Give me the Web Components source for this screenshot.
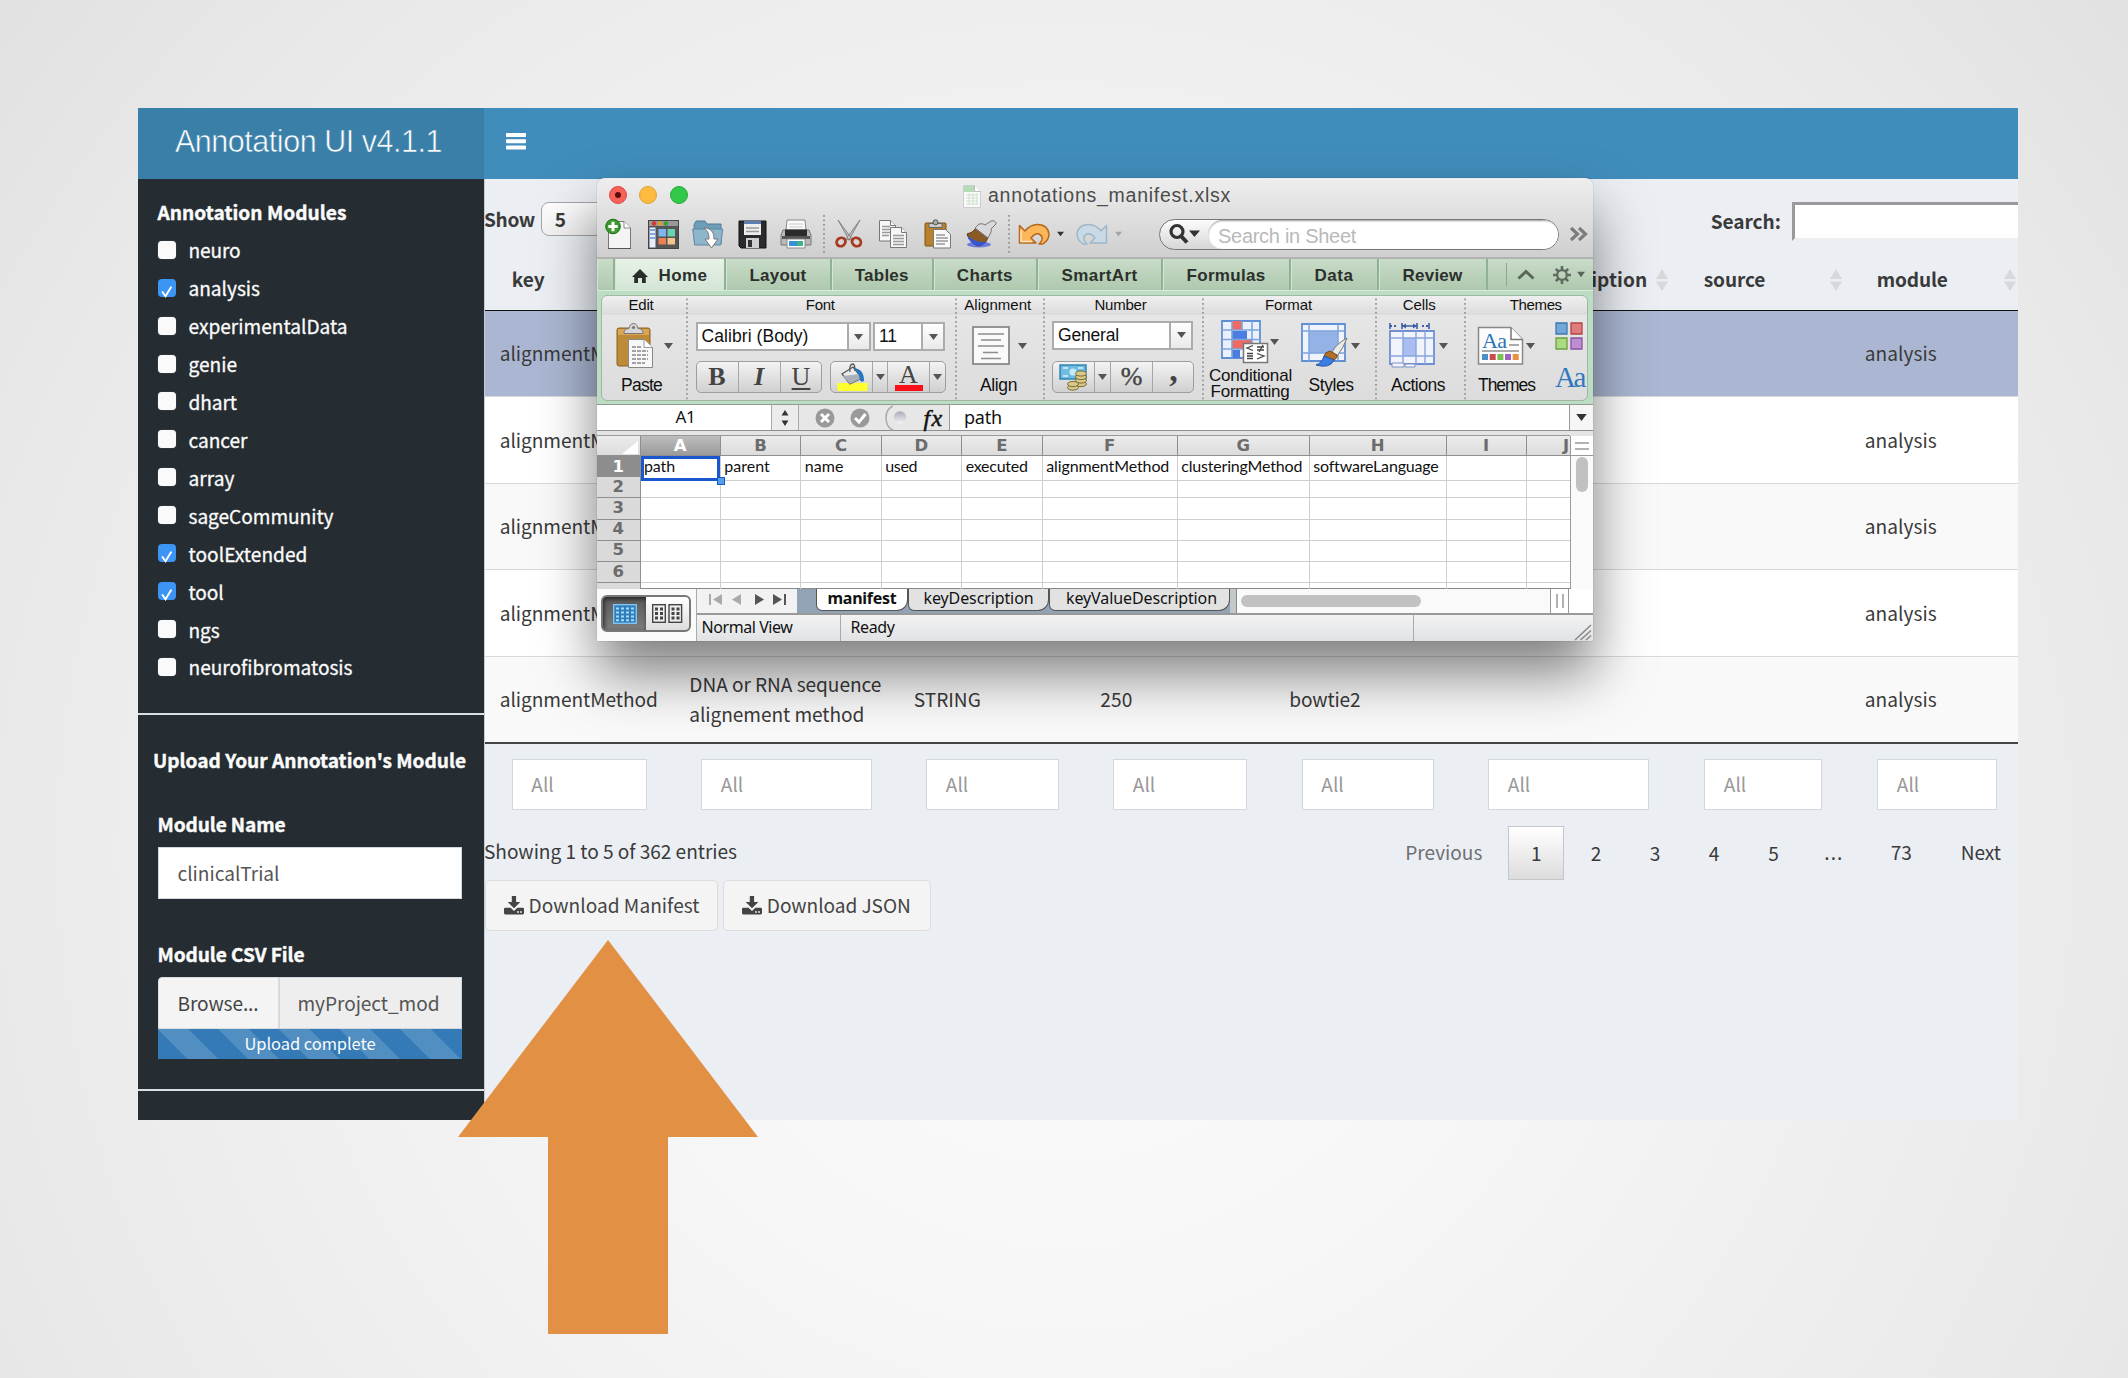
<!DOCTYPE html>
<html lang="en">
<head>
<meta charset="utf-8">
<title>Annotation UI</title>
<style>
html,body{margin:0;height:100%;overflow:hidden}
</style>
</head>
<body>
<annotation-slide></annotation-slide>
<script>
const SRC = '"Noto Sans CJK JP","Source Sans Pro",sans-serif';
const HEL = '"Liberation Sans",Arial,sans-serif';

/* Lays items out on one grid line; every item starts at its own column line. */
function line(x0, h, items, style = '') {
  let prev = x0, cols = [];
  for (const [x] of items) { cols.push((x - prev) + 'px'); prev = x; }
  cols.push('auto');
  return `<div style="display:grid;grid-template-columns:${cols.join(' ')};grid-template-rows:${h}px;height:${h}px;align-items:center;justify-content:start;${style}"><i></i>${items.map(i => `<div class="c">${i[1]}</div>`).join('')}</div>`;
}
const t = (s, w, style = '') => `<ui-text w="${w}" style="${style}">${s}</ui-text>`;
const ic = (n, style = '') => `<ui-icon name="${n}" style="${style}"></ui-icon>`;

class Base extends HTMLElement {
  connectedCallback() {
    if (this.shadowRoot) return;
    this.attachShadow({ mode: 'open' }).innerHTML = '<style>.c{display:flex;align-items:center;width:0;white-space:nowrap}.c>*{flex:none}' + this.css() + '</style>' + this.html();
  }
}

/* Text whose tracking is adjusted to a given width. */
customElements.define('ui-text', class extends HTMLElement {
  connectedCallback() {
    if (this.shadowRoot) return;
    this.attachShadow({ mode: 'open' }).innerHTML = '<style>:host{display:inline-block;white-space:pre;line-height:1.2;flex:none}</style><slot></slot>';
    const w = parseFloat(this.getAttribute('w'));
    if (!w) return;
    const n = this.textContent.length, nat = this.getBoundingClientRect().width;
    if (n > 1 && nat) this.style.letterSpacing = ((w - nat) / n).toFixed(3) + 'px';
  }
});

const caret = (c = '#555', w = 9, h = 6) => `<svg width="${w}" height="${h}" viewBox="0 0 9 6"><path d="M0 0h9L4.500 6z" fill="${c}"/></svg>`;
const ICONS = {
  bars: `<svg width="20" height="17"><g fill="#fff"><rect width="20" height="4" rx=".8"/><rect y="6.200" width="20" height="4" rx=".8"/><rect y="12.500" width="20" height="4" rx=".8"/></g></svg>`,
  sort: `<svg width="12" height="22"><path d="M6 0l6 10H0zM0 12.500h12L6 22z" fill="#d6d8da"/></svg>`,
  download: `<svg width="20" height="19" viewBox="0 0 20 19"><path d="M7.800 0h4.300v6h4.200L10 12.300 3.700 6h4.100z" fill="#444"/><path d="M1.300 11.800H6.600L10 15l3.400-3.200h5.300q1.300 0 1.300 1.300v4q0 1.400-1.300 1.400H1.300Q0 18.500 0 17.100v-4q0-1.300 1.300-1.300z" fill="#444"/><circle cx="14" cy="16" r=".9" fill="#f4f4f4"/><circle cx="17" cy="16" r=".9" fill="#f4f4f4"/></svg>`,
  check: `<svg width="18" height="18"><path d="M4.500 9l3 4.200L13 4.200" fill="none" stroke="#fff" stroke-width="1.900" stroke-linecap="round"/></svg>`,
  xlsx: `<svg width="18" height="23"><path d="M.5.5h11l6 6v16H.5z" fill="#fafafa" stroke="#ccc"/><path d="M1 1h10v6H1z" fill="#b4dcb4"/><path d="M11.500.5v6h6" fill="#fff" stroke="#bbb"/><path d="M3 10h12M3 13h12M3 16h12M3 19h12M6 8v12M10 8v12M14 8v12" stroke="#cfe0cf"/></svg>`,
  neu: `<svg width="28" height="32"><path d="M5 3.500h14l6.500 6.500v20.500H3.500V8z" fill="#f4f4f4" stroke="#777"/><path d="M19 3.500V10h6.500" fill="#fff" stroke="#888"/><path d="M3 30.500h23" stroke="#555"/><circle cx="8" cy="8.500" r="7.300" fill="#3a9a2c" stroke="#1d6d16"/><path d="M8 3.800v9.400M3.300 8.500h9.400" stroke="#fff" stroke-width="3"/></svg>`,
  gallery: `<svg width="31" height="29"><rect x=".5" y=".5" width="30" height="28" fill="#555" stroke="#444"/><rect x="1" y="1" width="29" height="5" fill="#999"/><circle cx="6" cy="3.500" r="2.200" fill="#d8352a"/><circle cx="12" cy="3.500" r="2.200" fill="#e79a24"/><circle cx="18" cy="3.500" r="2.200" fill="#38a12c"/><path d="M1.500 7.500h6v20h-6z" fill="#e6eef9"/><path d="M2 10h5M2 14h5M2 18h5" stroke="#5e8ed8" stroke-width="1.600"/><path d="M10.500 9h7.500v7.500h-7.500z" fill="#7fb4ee"/><path d="M19.500 9H27v7.500h-7.500z" fill="#69d4b4"/><path d="M10.500 18H18v6.500h-7.500z" fill="#ee8058"/><path d="M19.500 18H27v6.500h-7.500z" fill="#f3c58c"/></svg>`,
  open: `<svg width="32" height="30"><path d="M2 6l2-4h9l2 3h14v20H3z" fill="#6f9db8" stroke="#4e7c98"/><path d="M.7 10h30l-2 16H2.700z" fill="#8fb5cb" stroke="#5b89a5"/><path d="M12 9c7 0 10 4 10 11h4l-6.500 9L13 20h4c0-5-1-8-5-11z" fill="#fff" stroke="#777"/></svg>`,
  save: `<svg width="29" height="29"><path d="M1 1h27v27H3l-2-2z" fill="#2b2b2f" stroke="#111"/><path d="M6 1h17v14H6z" fill="#eee"/><path d="M6 1h17v3H6z" fill="#5d7fb2"/><path d="M8 8h13M8 11.500h13" stroke="#999" stroke-width="1.500"/><path d="M8 18h13v10H8z" fill="#cfcfcf"/><path d="M10 20h4v7h-4z" fill="#333"/></svg>`,
  print: `<svg width="32" height="30"><path d="M7 1h18l1 11H6z" fill="#fafafa" stroke="#888"/><path d="M9 5h14M9 8h14" stroke="#ccc"/><path d="M3 11h26l2 5v10H1V16z" fill="#b9b9b9" stroke="#777"/><path d="M5 10.500h22v7H5z" fill="#2a2a2a"/><path d="M2 17h28v3H2z" fill="#555"/><path d="M7 20h18v9H7z" fill="#fff" stroke="#888"/><path d="M9 22h14v5H9z" fill="#3a8fd8"/><path d="M17 22h6v5h-6z" fill="#3fb48a"/></svg>`,
  cut: `<svg width="28" height="30"><path d="M3 1l14 19-3 1zM25 1L11 20l3 1z" fill="#bbb" stroke="#777" stroke-width=".8"/><g fill="none" stroke="#a8381e" stroke-width="2.800"><ellipse cx="6" cy="23" rx="4.600" ry="4" transform="rotate(-35 6 23)"/><ellipse cx="21.500" cy="23" rx="4.600" ry="4" transform="rotate(35 21.500 23)"/></g></svg>`,
  copy: `<svg width="30" height="30"><g fill="#f6f6f6" stroke="#777"><path d="M1.500 1.500h11l5 5v15.500h-16z"/><path d="M12.500 1.500v5h5"/><path d="M12.500 8.500h11l5 5v15h-16z"/><path d="M23.500 8.500v5h5"/></g><path d="M4 7.500h8M4 10.500h8M4 13.500h8M4 16.500h7M15 16.500h11M15 19.500h11M15 22.500h11M15 25.500h11" stroke="#999" stroke-width="1.300"/></svg>`,
  paste: `<svg width="28" height="30" viewBox="0 0 28 30"><rect x="1" y="4" width="21" height="23" rx="1" fill="#b9812c" stroke="#7c5315"/><path d="M5 4.500h13v4H5z" fill="#ccc" stroke="#666"/><circle cx="11.500" cy="3.300" r="2.500" fill="#aaa" stroke="#555"/><path d="M9.500 10.500h12l5 5v13.500h-17z" fill="#fafafa" stroke="#777"/><path d="M12 16h9M12 19h12M12 22h12M12 25h9" stroke="#999" stroke-width="1.400"/></svg>`,
  brush: `<svg width="34" height="30"><ellipse cx="14" cy="25.500" rx="12" ry="3" fill="#4a5fe0" opacity=".75"/><path d="M2 15q6-1 9-6l12 9q-2 8-10 9Q5 24 2 15z" fill="#8a5a24" stroke="#5d3b14"/><path d="M2 16q2 8 11 11 6-1 8-4Q9 24 2 16z" fill="#3357d6"/><path d="M10 9l4-4q4-1 6 1l6-4q5-1 5 3l-5 5q1 3-1 5l-2 4z" fill="#d9d9dc" stroke="#777"/></svg>`,
  undo: `<svg width="32" height="24" viewBox="0 0 32 24"><path d="M1.500 3.500L1.500 21H18l-5-5q4-5 8-4 4 2 3 6-1 2-3 4h4q6-4 6-10Q30 3 20 2.500 13 2 7 9z" fill="#fbb75a" stroke="#b5671a" stroke-width="1.500" stroke-linejoin="round"/><path d="M3 8v11.500h11" fill="none" stroke="#fde3bd" stroke-width="1.500"/></svg>`,
  redo: `<svg width="32" height="24" viewBox="0 0 32 24"><g transform="translate(32 0) scale(-1 1)"><path d="M1.500 3.500L1.500 21H18l-5-5q4-5 8-4 4 2 3 6-1 2-3 4h4q6-4 6-10Q30 3 20 2.500 13 2 7 9z" fill="#c9dae6" stroke="#9fb7c9" stroke-width="1.500" stroke-linejoin="round"/></g></svg>`,
  mag: `<svg width="32" height="20"><circle cx="8" cy="7.500" r="6" fill="none" stroke="#333" stroke-width="3.200"/><path d="M12 12l6 6.500" stroke="#333" stroke-width="4"/><path d="M20 6.500h11L25.500 13z" fill="#333"/></svg>`,
  more: `<svg width="20" height="14"><path d="M2 1l6.500 6L2 13M10 1l6.500 6L10 13" fill="none" stroke="#7c7c7c" stroke-width="3.200"/></svg>`,
  home: `<svg width="16" height="14"><path d="M8 0l8 8h-2.200v6H10V9H6v5H2.200V8H0z" fill="#2a2d2a"/></svg>`,
  chev: `<svg width="18" height="11"><path d="M1.500 9.500L9 2.500l7.500 7" fill="none" stroke="#5a665a" stroke-width="3"/></svg>`,
  gear: `<svg width="18" height="18" viewBox="-9 -9 18 18"><circle r="4.800" fill="none" stroke="#5f6b5f" stroke-width="2.200"/><g stroke="#5f6b5f" stroke-width="2.600"><path d="M0-5V-9M0 5V9M-5 0H-9M5 0H9M3.500-3.500L6.200-6.200M-3.500-3.500L-6.200-6.200M3.500 3.500L6.200 6.200M-3.500 3.500L-6.200 6.200"/></g></svg>`,
  bigpaste: `<svg width="38" height="46"><rect x="1" y="5" width="33" height="38" rx="2" fill="#bd8a37" stroke="#8a6020"/><path d="M2 6h31v6H2z" fill="#d9a655"/><path d="M8 10.500q0-5 5-5 1-5 4.500-5t4.500 5q5 0 5 5z" fill="#d6d6d6" stroke="#777"/><circle cx="17.500" cy="4.500" r="1.600" fill="#777"/><path d="M12.500 16.500H28l8.500 8v20h-24z" fill="#f7f7f7" stroke="#888"/><path d="M28 16.500v8h8.500" fill="#fff" stroke="#999"/><path d="M16 24h9M16 28h16M16 32h16M16 36h16M16 40h13" stroke="#888" stroke-width="1.500" stroke-dasharray="4 1"/></svg>`,
  bucket: `<svg width="32" height="28"><path d="M1.500 25V20h30v8h-30z" fill="#ffff2e"/><path d="M6 11L17 4l9 11-12 6z" fill="#e8ebee" stroke="#555" stroke-width="1.300"/><path d="M7 13l16-2 3 4-12 6z" fill="#a8b0b8"/><path d="M14 9q-1-8 3-8 2 0 2 7" fill="none" stroke="#555" stroke-width="1.300"/><path d="M18 5q10 1 10 13-3 2-4-1-1-7-6-12z" fill="#2375c0"/></svg>`,
  align: `<svg width="38" height="40"><rect x="1" y="1" width="36" height="37" fill="#fafafa" stroke="#8a8a8a" stroke-width="1.800"/><path d="M6 8h26M9 14h20M6 20h26M11 26.500h15M9 32.500h20" stroke="#8d8d8d" stroke-width="1.600"/></svg>`,
  money: `<svg width="30" height="27"><rect x="1" y="1" width="26" height="14" fill="#6fbce0" stroke="#2e86b4" stroke-width="1.500"/><path d="M4 4h5M4 12h5M19 4h5" stroke="#d9f1fb" stroke-width="1.500"/><circle cx="14" cy="8" r="3.500" fill="#c7e9f7"/><g fill="#d8c88a" stroke="#7c6c34"><ellipse cx="22" cy="20" rx="5.500" ry="2.600"/><ellipse cx="22" cy="16.500" rx="5.500" ry="2.600"/><ellipse cx="22" cy="13" rx="5.500" ry="2.600"/><ellipse cx="22" cy="9.500" rx="5.500" ry="2.600"/><ellipse cx="14" cy="23.500" rx="5.500" ry="2.600"/><ellipse cx="14" cy="20" rx="5.500" ry="2.600"/></g></svg>`,
  cond: `<svg width="48" height="44"><path d="M1 1h38v37H1z" fill="#eaf1fc" stroke="#5f8fd2" stroke-width="1.800"/><path d="M11 1h10v9H11z M11 20h20v9H11z" fill="#ef6a60"/><path d="M11 11h15v8H11zM11 30h8v8h-8z" fill="#4b7de0"/><path d="M1 10h38M1 19.500h38M1 29h38M11 1v37M21 1v9M31 1v37" stroke="#7ea4dd" stroke-width="1.600"/><path d="M22.500 23.500h24v19h-24z" fill="#fff" stroke="#777" stroke-width="1.500"/><path d="M32 25.500l-6 2.500 6 2.500M26 33.500h6M26 36h6M26 38.500h6M36 27h7M36 30h7M42 25l-4 7M36 33.500l7 2.500-7 3" fill="none" stroke="#444" stroke-width="1.300"/></svg>`,
  styles: `<svg width="48" height="46"><path d="M1 1h43v37H1z" fill="#eef3fc" stroke="#5f8fd2" stroke-width="1.800"/><path d="M8 8h29v22H8z" fill="#94b2e6"/><path d="M1 8h43M1 30h43M8 1v37M37 1v37" stroke="#7ea4dd" stroke-width="1.500"/><path d="M46 15q-11 6-15 14l5 4q6-7 10-18z" fill="#e9e9e9" stroke="#777"/><path d="M29 28q-5 1-6 5l10 4q4-2 3-5z" fill="#b0702a" stroke="#7a4a14"/><path d="M23 33q-2 7-8 9 14 4 18-5z" fill="#3b7de0" stroke="#2458a8"/></svg>`,
  actions: `<svg width="47" height="46"><path d="M1 3h8M33 3h7" stroke="#3a5da8" stroke-width="2" stroke-dasharray="2 2"/><path d="M1 0v6M13 0v6M28 0v6M40 0v6M13 3h15" stroke="#3a5da8" stroke-width="1.600"/><path d="M13 3l4-2.500v5zM28 3l-4-2.500v5z" fill="#3a5da8"/><path d="M1 8h44v33H1z" fill="#f1f4fc" stroke="#6e8fd0" stroke-width="1.800"/><path d="M14 15h13v18H14z" fill="#a9bdf0"/><path d="M1 15h44M1 33h44M14 8v33M27 8v33M36 8v33" stroke="#8aa4dc" stroke-width="1.400"/><path d="M3 40h12v4H3zM16 41h10v3H16z" fill="#f3f5fb" stroke="#7b90c4"/></svg>`,
  themes: `<svg width="47" height="40"><path d="M1.500 1.500h32l12 12v24.500h-44z" fill="#fcfcfc" stroke="#888" stroke-width="1.500"/><path d="M34 1.500V13.500h11.500" fill="#fff" stroke="#777" stroke-width="1.500"/><text x="5" y="22" font-family="Liberation Serif" font-size="22" fill="#2b72ba" textLength="25">Aa</text><path d="M32 19h10M5 25h37" stroke="#aaa" stroke-width="2"/><path d="M5 28h6v6H5z" fill="#4a90c8"/><path d="M12.700 28h6v6h-6z" fill="#cc4a50"/><path d="M20.400 28h6v6h-6z" fill="#78c050"/><path d="M28 28h6v6h-6z" fill="#a060c0"/><path d="M35.700 28h6v6h-6z" fill="#ea9040"/></svg>`,
  squares: `<svg width="28" height="28"><g stroke-width="1.300"><path d="M1 1h11v11H1z" fill="#72a8d8" stroke="#3d78b0"/><path d="M16 1h11v11H16z" fill="#e07c7c" stroke="#b04444"/><path d="M1 16h11v11H1z" fill="#acdc82" stroke="#6aa040"/><path d="M16 16h11v11H16z" fill="#bf8ed2" stroke="#8a52a4"/></g></svg>`,
  step: `<svg width="8" height="16"><path d="M4 0l3.500 5.500H.5zM.5 10.500h7L4 16z" fill="#333"/></svg>`,
  no: `<svg width="20" height="20"><circle cx="10" cy="10" r="9.500" fill="#999"/><path d="M6 6l8 8M14 6l-8 8" stroke="#fff" stroke-width="3"/></svg>`,
  yes: `<svg width="20" height="20"><circle cx="10" cy="10" r="9.500" fill="#999"/><path d="M5 10l4 4 6.500-8" fill="none" stroke="#fff" stroke-width="3"/></svg>`,
  ball: `<svg width="24" height="26"><defs><linearGradient id="b" x2="0" y2="1"><stop stop-color="#a9acb8"/><stop offset="1" stop-color="#f4f4f4"/></linearGradient></defs><path d="M9 1Q2 4 2 13t7 12" fill="none" stroke="#aaa" stroke-width="1.500"/><circle cx="16" cy="12.500" r="6.200" fill="url(#b)"/></svg>`,
  corner: `<svg width="16" height="13"><path d="M16 0v13H0z" fill="#fff"/></svg>`,
  normal: `<svg width="24" height="20"><rect x=".7" y=".7" width="22.600" height="18.600" fill="#2e7cba" stroke="#7fc4f2" stroke-width="1.400"/><path d="M3 3.500h3v2H3zM8 3.500h3v2H8zM13 3.500h3v2h-3zM18 3.500h3v2h-3zM3 7.500h3v2H3zM8 7.500h3v2H8zM13 7.500h3v2h-3zM18 7.500h3v2h-3zM3 11.500h3v2H3zM8 11.500h3v2H8zM13 11.500h3v2h-3zM18 11.500h3v2h-3zM3 15.300h3v2H3zM8 15.300h3v2H8zM13 15.300h3v2h-3zM18 15.300h3v2h-3z" fill="#a5dbfa"/></svg>`,
  pages: `<svg width="31" height="20"><g fill="#eee" stroke="#444" stroke-width="1.400"><rect x=".7" y=".7" width="12.600" height="17.600"/><rect x="17" y=".7" width="12.600" height="17.600"/></g><path d="M3 3.500h3v3H3zM8 3.500h3v3H8zM3 8h3v3H3zM8 8h3v3H8zM3 12.500h3v3H3zM8 12.500h3v3H8zM19.500 3.500h3v3h-3zM24.500 3.500h3v3h-3zM19.500 8h3v3h-3zM24.500 8h3v3h-3zM19.500 12.500h3v3h-3zM24.500 12.500h3v3h-3z" fill="#444"/></svg>`,
  first: `<svg width="13" height="11"><path d="M1 0v11" stroke="#aaa" stroke-width="2"/><path d="M13 0v11L4 5.500z" fill="#aaa"/></svg>`,
  prev: `<svg width="9" height="11"><path d="M9 0v11L0 5.500z" fill="#aaa"/></svg>`,
  next: `<svg width="9" height="11"><path d="M0 0v11l9-5.500z" fill="#555"/></svg>`,
  last: `<svg width="13" height="11"><path d="M12 0v11" stroke="#555" stroke-width="2"/><path d="M0 0v11l9-5.500z" fill="#555"/></svg>`,
  grip: `<svg width="16" height="16"><path d="M0 16L16 1M5.500 16L16 6.500M11 16l5-4.500" stroke="#888" stroke-width="1.500"/></svg>`,
  hsplit: `<svg width="14" height="8"><path d="M0 1h14M0 7h14" stroke="#999" stroke-width="1.500"/></svg>`,
  vsplit: `<svg width="8" height="14"><path d="M1 0v14M7 0v14" stroke="#999" stroke-width="1.500"/></svg>`,
  caret: caret(), caretk: caret('#333', 7, 6), caretg: caret('#a3a3a3', 7, 6), caretb: caret('#333', 11, 7), carett: caret('#5a665a', 8, 7)
};
customElements.define('ui-icon', class extends Base {
  css() { return ':host{display:inline-flex;flex:none}svg{display:block;overflow:visible}'; }
  html() { return ICONS[this.getAttribute('name')] || ''; }
});

customElements.define('module-check', class extends Base {
  css() { return `:host{display:flex;height:37.93px;align-items:center;padding-left:20px}
    .b{width:18px;height:18px;border-radius:4px;background:#fafafa;box-shadow:0 0 1px #999;margin-right:12.500px;flex:none;position:relative;top:-1px}
    :host([on]) .b{background:#3c94f4;box-shadow:none}`; }
  html() { return `<div class="b">${this.hasAttribute('on') ? ic('check') : ''}</div><slot></slot>`; }
});

customElements.define('side-bar', class extends Base {
  css() { return `:host{display:flex;flex-direction:column;width:346px;background:#252d32;color:#fbfbfb;font:19.100px ${SRC}}
    .h{font-weight:700;display:flex;align-items:center;-webkit-text-stroke:.4px}
    hr{border:0;height:2px;background:#dcdfe2;margin:0}
    .in{box-sizing:border-box;width:304px;height:52px;background:#fff;border:1.500px solid #d2d6de;margin-left:20px;color:#555;display:flex;align-items:center}
    .up{display:flex;box-sizing:border-box;width:304px;height:52px;margin-left:20px;color:#444}
    .up>div{box-sizing:border-box;display:flex;align-items:center;padding-left:18.500px}
    .br{width:121px;background:#f4f4f4;border:1px solid #ddd;border-radius:4px 0 0 0}
    .fn{width:183px;background:#eee;border:1.500px solid #d2d6de;color:#555}
    .pr{width:304px;height:30px;margin-left:20px;background:linear-gradient(45deg,rgba(255,255,255,.15) 25%,transparent 25%,transparent 50%,rgba(255,255,255,.15) 50%,rgba(255,255,255,.15) 75%,transparent 75%) 0 0/60.600px 60.600px #337ab7;display:flex;align-items:center;justify-content:center;font-size:16.500px}
    module-check{-webkit-text-stroke:.3px}`; }
  html() {
    const m = [['neuro', 52], ['analysis', 71.5, 1], ['experimentalData', 159], ['genie', 48.5], ['dhart', 48.5], ['cancer', 59], ['array', 46], ['sageCommunity', 145], ['toolExtended', 119, 1], ['tool', 35, 1], ['ngs', 31], ['neurofibromatosis', 164]];
    return `<div class="h" style="padding-left:19.500px;height:52px;margin-bottom:.800px">${t('Annotation Modules', 189, 'position:relative;top:7px')}</div>
    ${m.map(([n, w, on]) => `<module-check ${on ? 'on' : ''}>${t(n, w)}</module-check>`).join('')}
    <hr style="margin-top:26.200px">
    <div class="h" style="height:90px;padding-left:15px">${t("Upload Your Annotation's Module", 313)}</div>
    <div class="h" style="height:42px;padding-left:19.500px;position:relative;top:-2px">${t('Module Name', 128)}</div>
    <div class="in"><span style="width:18.500px"></span>${t('clinicalTrial', 102)}</div>
    <div class="h" style="height:78px;padding-left:19.500px;box-sizing:border-box;padding-top:33px">${t('Module CSV File', 147)}</div>
    <div class="up"><div class="br">${t('Browse...', 81)}</div><div class="fn" style="padding-left:17.500px">${t('myProject_mod', 142)}</div></div>
    <div class="pr">${t('Upload complete', 131)}</div>
    <hr style="margin-top:30px">`;
  }
});

customElements.define('data-table', class extends Base {
  css() { return `:host{display:block;flex:1;min-width:0;background:#ebeff4;color:#3a3a3a;font:19.100px ${SRC};overflow:hidden;border-left:1px solid #c8ccd2;box-sizing:border-box}
    .r{border-bottom:1.500px solid #d9d9da;box-sizing:border-box;height:86.500px;display:flex}
    .all{box-sizing:border-box;height:51px;background:#fff;border:1.500px solid #d2d8e2;display:flex;align-items:center;padding-left:18.500px;color:#999;flex:none}
    .cur{box-sizing:border-box;width:56px;height:54px;border:1.500px solid #c5c6c9;background:linear-gradient(#fff,#dcdcdc);display:flex;align-items:center;justify-content:center;flex:none}
    .btn{box-sizing:border-box;height:51px;border:1.500px solid #ddd;border-radius:5px;background:#f4f4f4;color:#444;display:flex;align-items:center;flex:none;padding-left:18px;gap:4.500px}
    .sel{box-sizing:border-box;width:105px;height:34px;border:1.500px solid #a5a5a5;border-radius:8px;background:linear-gradient(#fdfdfd,#f1f1f1);display:flex;align-items:center;padding-left:13px;font-weight:700}
    .q{width:300px;height:33px;border:3px solid #9a9a9a;border-right-color:#eee;border-bottom-color:#eee;background:#fff}`; }
  html() {
    const x = 485.2, row = (bg, extra = []) => `<div class="r" style="background:${bg}">${line(x, 86, [[500, t('alignmentMethod', 158)], ...extra, [1865, t('analysis', 72)]])}</div>`;
    const all = [[512, 135.500], [701.500, 171], [926.500, 133], [1113.500, 134], [1302, 132], [1488.500, 161], [1704.500, 118], [1877.500, 120]];
    return `${line(x, 80, [[485.2, t('Show', 51, 'position:relative;left:-1px')], [541, '<div class="sel">5</div>'], [1711, t('Search:', 70, 'position:relative;top:2px')], [1792, '<div class="q" style="position:relative;top:2px"></div>']], 'font-weight:700')}
    ${line(x, 41, [[512, t('key', 33)], [1487, t('valueDescription', 160.500)], [1656.500, ic('sort')], [1704, t('source', 61.500)], [1830, ic('sort')], [1877, t('module', 71)], [2004, ic('sort')]], 'font-weight:700;padding-bottom:9.500px;border-bottom:1.500px solid #111;box-sizing:content-box')}
    ${row('#abb7d2')}${row('#fff')}${row('#f9f9f9')}${row('#fff')}
    <div class="r" style="background:#f9f9f9;border-bottom:2px solid #444;height:87px">${line(x, 85, [[500, t('alignmentMethod', 158)], [689.500, `<div style="line-height:30px;display:flex;flex-direction:column;align-items:flex-start">${t('DNA or RNA sequence', 192, 'line-height:30px')}${t('alignement method', 175, 'line-height:30px')}</div>`], [914, t('STRING', 67)], [1100.500, t('250', 32)], [1289.500, t('bowtie2', 71)], [1865, t('analysis', 72)]])}</div>
    ${line(x, 51, all.map(([a, w]) => [a, `<div class="all" style="width:${w}px">${t('All', 22.500)}</div>`]), 'margin-top:15px')}
    ${line(x, 54, [[485.2, t('Showing 1 to 5 of 362 entries', 253, 'position:relative;top:-1px;left:-1px')], [1405.500, t('Previous', 77, 'color:#6f7072')], [1508.500, '<div class="cur">1</div>'], [1591, '2'], [1650, '3'], [1709, '4'], [1768.500, '5'], [1824.500, t('...', 19)], [1891, t('73', 21)], [1961, t('Next', 40)]], 'margin-top:16px;line-height:24px')}
    ${line(x, 51, [[485.2, `<div class="btn" style="width:233px">${ic('download')}${t('Download Manifest', 171)}</div>`], [723.500, `<div class="btn" style="width:208px">${ic('download')}${t('Download JSON', 144)}</div>`]], 'margin-top:.500px')}`;
  }
});

customElements.define('xl-titlebar', class extends Base {
  css() { return `:host{display:block;height:81px;background:linear-gradient(#eee,#cfcfcf);border-bottom:2px solid #b2b2b2;box-sizing:border-box;font:19.500px ${HEL};color:#4c4c4c}
    .d{width:18px;height:18px;border-radius:50%;box-sizing:border-box;display:flex;align-items:center;justify-content:center;flex:none}
    .dot{height:39px;width:2px;background:linear-gradient(#9c9c9c 2px,transparent 2px) 0 0/2px 4.500px}
    .s{box-sizing:border-box;width:400px;height:31px;border-radius:16px;border:1.500px solid #777;background:linear-gradient(#fcfcfc,#d6d6d6);display:flex;flex:none;align-items:center;padding-left:9px;overflow:hidden}
    .w{margin-left:7px;height:29px;width:352px;flex:none;border-radius:15px;background:#fff;color:#b9b9b9;display:flex;align-items:center;padding:3px 0 0 10px;box-sizing:border-box;font-size:20px;box-shadow:inset 0 1px 2px #999}`; }
  html() {
    return line(597, 34, [[609, '<div class="d" style="background:#f8605a;border:1px solid #dd4c47"><div style="width:6px;height:6px;border-radius:50%;background:#5d0d0b"></div></div>'], [639, '<div class="d" style="background:#fdbc40;border:1px solid #dfa135"></div>'], [669.500, '<div class="d" style="background:#34c84a;border:1px solid #27ab38"></div>'], [963, ic('xlsx', 'position:relative;top:1px')], [988, t('annotations_manifest.xlsx', 243, 'position:relative;top:1px')]])
    + line(597, 44, [[605, ic('neu')], [648, ic('gallery')], [692, ic('open')], [737.500, ic('save')], [780, ic('print')], [823, '<div class="dot"></div>'], [834.500, ic('cut')], [877.500, ic('copy')], [924, ic('paste')], [965, ic('brush')], [1008, '<div class="dot"></div>'], [1018, ic('undo')], [1057, ic('caretk')], [1075.500, ic('redo')], [1115, ic('caretg')], [1159, `<div class="s">${ic('mag')}<div class="w">${t('Search in Sheet', 138)}</div></div>`], [1569, ic('more')]]);
  }
});

customElements.define('xl-tabs', class extends Base {
  css() { return `:host{display:flex;height:31px;background:linear-gradient(#c9dcc8,#aec8ae);font:700 17px ${HEL};color:#2c302c}
    div.t{box-sizing:border-box;border-right:2px solid #8fb392;box-shadow:inset 1px 0 #d3e5d3;display:flex;align-items:center;justify-content:center;flex:none;padding-top:2.500px}
    .home{background:linear-gradient(#e8f2e8,#d3e5d5);gap:11px}
    .e{display:flex;align-items:center;flex:none}`; }
  html() {
    const T = [['Layout', 106, 57], ['Tables', 101.500, 54], ['Charts', 104.500, 56], ['SmartArt', 125, 76], ['Formulas', 128, 79], ['Data', 88, 39], ['Review', 109, 60]];
    return `<div class="t" style="width:18px"></div><div class="t home" style="width:111px">${ic('home')}${t('Home', 49)}</div>` + T.map(([n, w, tw]) => `<div class="t" style="width:${w}px">${t(n, tw)}</div>`).join('') +
    `<div class="e" style="margin-left:18px"><div style="border-left:1.500px solid #8ea68e;height:23px;margin-right:10px"></div>${ic('chev')}${ic('gear', 'margin-left:17.500px')}${ic('carett', 'margin-left:6px')}</div>`;
  }
});

customElements.define('xl-ribbon', class extends Base {
  css() { return `:host{display:block;box-sizing:border-box;height:115px;background:#bddcc4;padding:4px 5px 3px 4px;border-top:1px solid #d9ecda;border-bottom:1.500px solid #8e9c90;font:15px ${HEL};color:#111}
    .p{height:100%;box-sizing:border-box;border:1.500px solid #9fb8a2;border-radius:6px;background:linear-gradient(#efefef 0,#dedede 17px,#d6d6d6 18px,#e6e6e6 19px,#dcdcdc);display:flex}
    .g{display:flex;flex-direction:column;flex:none}
    .g+.g{background:linear-gradient(#a0a0a0 2px,transparent 2px) 0 7px/2px 4.500px repeat-y}
    .n{height:20px;display:flex;align-items:center;justify-content:center;padding-bottom:2px;box-sizing:border-box}
    .f{box-sizing:border-box;height:29px;background:#fff;border:2px solid #acacac;display:flex;flex:none;align-items:center;padding-left:4px;font-size:17.500px;justify-content:space-between}
    .f .a{width:20px;height:100%;background:linear-gradient(#fff,#e9e9e9);border-left:2px solid #acacac;display:flex;align-items:center;justify-content:center}
    .bs{box-sizing:border-box;height:32px;border:1.500px solid #9e9e9e;border-radius:5px;background:linear-gradient(#f3f3f3,#d0d0d0);display:flex;flex:none;position:relative;top:-1px}
    .bs>div{display:flex;align-items:center;justify-content:center;box-sizing:border-box;font:26px "Liberation Serif",serif;color:#444;flex:none}
    .bs>div+div{border-left:1.500px solid #a5a5a5}`; }
  html() {
    const g = (x0, x1, name, nw, off, body) => `<div class="g" style="width:${x1 - x0}px"><div class="n"><span style="display:flex;position:relative;left:${off}px">${t(name, nw)}</span></div>${body}</div>`;
    const big = (x0, x, icon, cx, lx, label, lw) => line(x0, 48, [[x, ic(icon)], [cx, ic('caret')]], 'margin-top:6px') + line(x0, 20, [[lx, t(label, lw, 'font-size:17.500px')]], 'margin-top:5px');
    return `<div class="p">
    ${g(602, 686, 'Edit', 25, -3, big(602, 616, 'bigpaste', 664, 621, 'Paste', 41))}
    ${g(686, 954.500, 'Font', 29, 0, line(686, 29, [[695.500, `<div class="f" style="width:175px">${t('Calibri (Body)', 107)}<span class="a">${ic('caret')}</span></div>`], [873, `<div class="f" style="width:72px">${t('11', 18)}<span class="a">${ic('caret')}</span></div>`]], 'margin-top:6px') + line(686, 32, [[695.500, `<div class="bs" style="width:126px"><div style="width:41px;font-weight:700">B</div><div style="width:42px;font-style:italic;font-weight:700">I</div><div style="width:42px;text-decoration:underline;text-underline-offset:3px">U</div></div>`], [830, `<div class="bs" style="width:116px"><div style="width:41px">${ic('bucket')}</div><div style="width:15px">${ic('caret')}</div><div style="width:42px"><span style="border-bottom:6px solid #f81018;line-height:21px;width:28px;text-align:center">A</span></div><div style="width:16px">${ic('caret')}</div></div>`]], 'margin-top:11px'))}
    ${g(954.500, 1043, 'Alignment', 67, -1, big(954.500, 971.500, 'align', 1018, 980, 'Align', 37))}
    ${g(1043, 1202, 'Number', 52, -2, line(1043, 30, [[1052, `<div class="f" style="width:141px">${t('General', 61)}<span class="a">${ic('caret')}</span></div>`]], 'margin-top:4px') + line(1043, 32, [[1052, `<div class="bs" style="width:142px"><div style="width:41px">${ic('money')}</div><div style="width:16px">${ic('caret')}</div><div style="width:42px;-webkit-text-stroke:.4px">%</div><div style="width:42px;font-weight:700;font-size:34px;line-height:28px;padding-bottom:14px">,</div></div>`]], 'margin-top:12px'))}
    ${g(1202, 1375, 'Format', 47, 0, `<div style="display:flex"><div style="width:94px;flex:none">` + line(1202, 44, [[1220.500, ic('cond')], [1269.500, ic('caret')]], 'margin-top:4px') + line(1202, 17, [[1209, t('Conditional', 83, 'font-size:17px')]], 'margin-top:3.500px') + line(1202, 17, [[1210.500, t('Formatting', 79, 'font-size:17px')]], 'margin-top:-.500px') + `</div><div>` + big(1296, 1301, 'styles', 1350.500, 1308.500, 'Styles', 45) + '</div></div>')}
    ${g(1375, 1463.500, 'Cells', 33, 0, big(1375, 1389, 'actions', 1438.500, 1391, 'Actions', 54))}
    ${g(1463.500, 1587, 'Themes', 52, 10.500, `<div style="display:flex"><div style="width:86px;flex:none">` + big(1463.500, 1476.500, 'themes', 1526, 1478, 'Themes', 57) + `</div><div style="padding:6px 0 0 5.500px;display:flex;flex-direction:column;align-items:flex-start;gap:11px">${ic('squares')}${t('Aa', 29, 'font:29px/32px Liberation Serif;color:#3278be')}</div></div>`)}
    </div>`;
  }
});

customElements.define('xl-formula', class extends Base {
  css() { return `:host{display:flex;height:26px;border-bottom:1.500px solid #8f8f8f;background:#fff;font:18px "Noto Sans";color:#111;box-sizing:border-box}
    :host>div{display:flex;align-items:center;box-sizing:border-box;flex:none}`; }
  html() {
    return `<div style="width:174px;justify-content:center;padding-left:3px;font-size:17px">${t('A1', 20)}</div><div style="width:28px;border:solid #aaa;border-width:0 1.500px;background:#ececec;justify-content:center">${ic('step')}</div>
    <div style="width:151px;background:#e7e7e7;border-right:1.500px solid #999">${line(799, 24, [[815, ic('no')], [850, ic('yes')], [884, ic('ball')], [923.500, t('fx', 20, 'font:italic 24px/22px Liberation Serif;-webkit-text-stroke:.5px')]])}</div>
    <div style="width:619px;padding-left:14px">${t('path', 38)}</div><div style="width:24px;border-left:1.500px solid #999;justify-content:center;background:#f6f6f6">${ic('caretb')}</div>`;
  }
});

customElements.define('xl-grid', class extends Base {
  css() { return `:host{display:flex;height:158px;border-top:5px solid #e4e4e4;box-sizing:border-box;background:#fff;font:16px Lato,sans-serif;color:#111}
    .s{width:973px;flex:none;overflow:hidden;box-shadow:0 -1px #999,inset 0 1px #999}
    .r{display:grid;grid-template-columns:43.500px 80.300px 80.400px 80.500px 80.500px 80.500px 135px 132px 137px 80px 80px;height:21.200px}
    .r>*{box-sizing:border-box;border:solid #cecece;border-width:0 1.500px 1.500px 0;display:flex;align-items:center;padding:0 0 4.500px 3.500px}
    .r>:first-child,.h>*{border-color:#8f8f8f;background:#dadada;font:700 16.500px/18px "DejaVu Sans";color:#6c6c6c;justify-content:center;padding:0 0 1px}
    .h{height:20px}.h>*{background:linear-gradient(#ececec,#dcdcdc)!important;padding:0}
    .h>.on{background:linear-gradient(#bdbdbd,#9b9b9b)!important;color:#fff}
    .r>.on:first-child{background:#8d8d8d;color:#fff}
    .sel{position:relative}
    .sel:before{content:"";position:absolute;inset:0 0 -1px 0;border:3px solid #1b57cc}
    .sel:after{content:"";position:absolute;right:-5px;bottom:-5px;width:6px;height:6px;background:#55a0ea;border:1.500px solid #1b57cc;z-index:2}
    .v{width:23px;border-left:1.500px solid #999;box-sizing:border-box;background:#fafafa;display:flex;flex-direction:column;align-items:center}`; }
  html() {
    const H = 'ABCDEFGHI'.split(''), V = [['path', 31], ['parent', 45.500], ['name', 39], ['used', 32], ['executed', 62], ['alignmentMethod', 123], ['clusteringMethod', 121], ['softwareLanguage', 125]];
    const cells = n => '<div></div>'.repeat(n);
    return `<div class="s"><div class="r h"><div style="justify-content:flex-end;padding:3px 2px 0 0">${ic('corner')}</div>${H.map((h, i) => `<div class="${i ? '' : 'on'}">${h}</div>`).join('')}<div>J</div></div>
    <div class="r"><div class="on">1</div>${V.map(([s, w], i) => `<div class="${i ? '' : 'sel'}">${t(s, w)}</div>`).join('')}${cells(2)}</div>
    ${[2, 3, 4, 5, 6].map(n => `<div class="r"><div>${n}</div>${cells(10)}</div>`).join('')}<div class="r"><div></div>${cells(10)}</div></div>
    <div class="v"><div style="height:19px;border-bottom:1.500px solid #999;width:100%;display:flex;align-items:center;justify-content:center;background:#fff">${ic('hsplit')}</div><div style="width:12px;height:35px;border-radius:6px;background:#c1c1c1;margin-top:1px"></div></div>`;
  }
});

customElements.define('xl-footer', class extends Base {
  css() { return `:host{display:flex;height:54px;margin-top:-1px;background:#f3f5f5;font:16px "Noto Sans";color:#111;border-top:1.500px solid #888;box-sizing:border-box}
    .m{width:100px;box-sizing:border-box;flex:none;border-right:1.500px solid #aaa;padding:6px 0 0 4px;background:#fafafa}
    .tg{box-sizing:border-box;width:90px;height:37px;border:2px solid #777;border-radius:6px;display:flex;background:linear-gradient(#fff,#ddd);overflow:hidden}
    .tg>div{flex:1;display:flex;align-items:center;justify-content:center}
    .b{display:flex;height:24px;background:#92a3b5}
    .tab{box-sizing:border-box;height:22px;background:#e2e2e2;border:1.500px solid #555;border-width:0 1.500px 1.500px 1px;border-radius:0 0 11px 6px;display:flex;align-items:center;justify-content:center;flex:none;padding-bottom:1px}
    .st{display:flex;height:29px;border-top:2px solid #999;background:linear-gradient(#f3f3f3,#dfe1e3);box-sizing:border-box}
    .st>div{display:flex;align-items:center;box-sizing:border-box;padding-bottom:1px}`; }
  html() {
    return `<div class="m"><div class="tg"><div style="background:linear-gradient(#5a5a5a,#7c7c7c);box-shadow:inset 1px 2px 4px #222">${ic('normal')}</div><div>${ic('pages')}</div></div></div>
    <div style="flex:1"><div class="b"><div style="width:100px;background:#f2f2f2;flex:none">${line(697, 20, [[709, ic('first')], [731.500, ic('prev')], [754.500, ic('next')], [773, ic('last')]])}</div>
    <div class="tab" style="margin-left:19px;width:92px;background:#fff;font-weight:700">${t('manifest', 69)}</div><div class="tab" style="width:141px">${t('keyDescription', 110)}</div><div class="tab" style="width:181px;padding-left:4px">${t('keyValueDescription', 151)}</div>
    <div style="width:6px;background:#c3c8cb;flex:none;border-right:1px solid #888"></div><div style="width:313px;background:#fafafa;flex:none;display:flex;align-items:center;padding-left:4px;box-sizing:border-box"><div style="width:180px;height:12px;border-radius:6px;background:#c1c1c1"></div></div><div style="width:19px;box-sizing:border-box;border:solid #999;border-width:0 1.500px;background:#fff;display:flex;align-items:center;justify-content:center">${ic('vsplit')}</div><div style="flex:1;background:#fff"></div></div>
    <div class="st"><div style="width:144px;padding-left:4.500px;border-right:1.500px solid #aaa;font:17px ${HEL};color:#333">${t('Normal View', 91)}</div><div style="width:573px;padding-left:9.500px;border-right:1.500px solid #aaa">${t('Ready', 44)}</div><div style="flex:1;justify-content:flex-end;padding-right:2px">${ic('grip', 'position:relative;top:4px')}</div></div></div>`;
  }
});

customElements.define('excel-window', class extends Base {
  css() { return ':host{display:block;position:absolute;left:597px;top:178px;width:996px;height:463px;border-radius:8px 8px 0 0;box-shadow:0 0 1px rgba(0,0,0,.5),0 32px 56px rgba(0,0,0,.5)}div{border-radius:8px 8px 0 0;overflow:hidden;height:463px}'; }
  html() { return '<div><xl-titlebar></xl-titlebar><xl-tabs></xl-tabs><xl-ribbon></xl-ribbon><xl-formula></xl-formula><xl-grid></xl-grid><xl-footer></xl-footer></div>'; }
});

customElements.define('annotation-slide', class extends Base {
  css() { return `:host{display:block;position:relative;width:2128px;height:1378px;box-sizing:border-box;padding:108px 110px 0 138px;background:radial-gradient(circle at 50% 62%,#fdfdfd 0,#f6f6f6 35%,#e9e9e9 80%,#e1e1e1 100%);overflow:hidden}
    .app{width:1880px;height:1012px;display:flex;flex-direction:column;overflow:hidden;background:#252d32}
    .top{display:flex;height:71px;flex:none;background:#408dbb}
    .logo{width:346px;background:#3a7fa8;display:flex;align-items:center;justify-content:center;color:#fff;font:30.500px ${HEL};-webkit-text-stroke:.6px #3a7fa8;padding:0 5px 5px 0;box-sizing:border-box}
    .nav{display:flex;align-items:center;padding-left:22px;padding-bottom:5px}
    .main{display:flex;flex:1;min-height:0}
    .arrow{position:absolute;left:458px;top:940px}`; }
  html() {
    return `<div class="app"><div class="top"><div class="logo">${t('Annotation UI v4.1.1', 267)}</div><div class="nav">${ic('bars')}</div></div>
    <div class="main"><side-bar></side-bar><data-table></data-table></div></div>
    <excel-window></excel-window>
    <svg class="arrow" width="300" height="394"><path d="M150 0L300 197H210V394H90V197H0z" fill="#e29043"/></svg>`;
  }
});
</script>
</body>
</html>
